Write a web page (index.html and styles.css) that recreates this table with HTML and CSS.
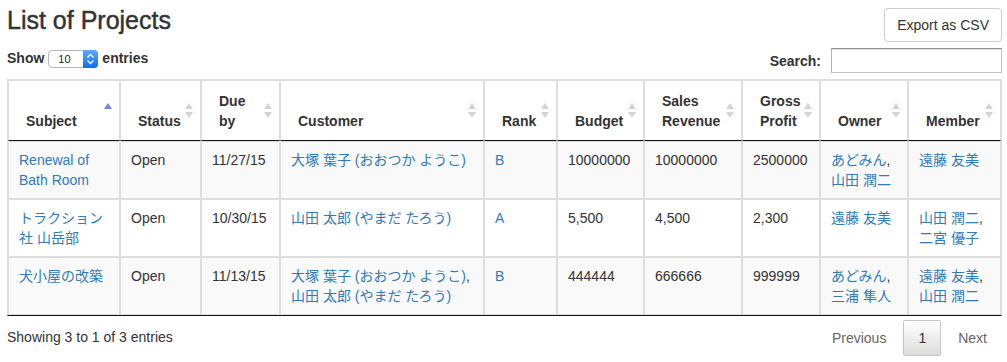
FILE: index.html
```html
<!DOCTYPE html>
<html lang="ja">
<head>
<meta charset="utf-8">
<title>List of Projects</title>
<link rel="stylesheet" href="styles.css">
</head>
<body>
<div class="page">
  <div class="title-row">
    <h3 class="title">List of Projects</h3>
    <button class="btn" type="button">Export as CSV</button>
  </div>
  <div class="controls">
    <div class="length">
      <span>Show</span>
      <span class="select"><span class="select-val">10</span><span class="stepper"><svg width="15" height="18" viewBox="0 0 15 18"><polyline points="4.5,7.5 7.5,4.5 10.5,7.5" fill="none" stroke="#fff" stroke-width="1.4"/><polyline points="4.5,10.5 7.5,13.5 10.5,10.5" fill="none" stroke="#fff" stroke-width="1.4"/></svg></span></span>
      <span>entries</span>
    </div>
    <div class="filter">
      <label class="filter-label" for="q">Search:</label>
      <input class="search" id="q" type="text">
    </div>
  </div>
  <table class="grid">
    <colgroup>
      <col class="c-subject"><col class="c-status"><col class="c-due"><col class="c-customer"><col class="c-rank"><col class="c-budget"><col class="c-sales"><col class="c-gross"><col class="c-owner"><col class="c-member">
    </colgroup>
    <thead>
      <tr>
        <th class="sort asc">Subject</th>
        <th class="sort both">Status</th>
        <th class="sort both">Due by</th>
        <th class="sort both">Customer</th>
        <th class="sort both">Rank</th>
        <th class="sort both">Budget</th>
        <th class="sort both">Sales Revenue</th>
        <th class="sort both">Gross Profit</th>
        <th class="sort both">Owner</th>
        <th class="sort both">Member</th>
      </tr>
    </thead>
    <tbody>
      <tr>
        <td><a href="#">Renewal of Bath Room</a></td>
        <td>Open</td>
        <td>11/27/15</td>
        <td><a href="#">大塚 葉子 (おおつか ようこ)</a></td>
        <td><a href="#">B</a></td>
        <td>10000000</td>
        <td>10000000</td>
        <td>2500000</td>
        <td><a href="#">あどみん</a>, <a href="#">山田 潤二</a></td>
        <td><a href="#">遠藤 友美</a></td>
      </tr>
      <tr>
        <td><a href="#">トラクション社 山岳部</a></td>
        <td>Open</td>
        <td>10/30/15</td>
        <td><a href="#">山田 太郎 (やまだ たろう)</a></td>
        <td><a href="#">A</a></td>
        <td>5,500</td>
        <td>4,500</td>
        <td>2,300</td>
        <td><a href="#">遠藤 友美</a></td>
        <td><a href="#">山田 潤二</a>, <a href="#">二宮 優子</a></td>
      </tr>
      <tr>
        <td><a href="#">犬小屋の改築</a></td>
        <td>Open</td>
        <td>11/13/15</td>
        <td><a href="#">大塚 葉子 (おおつか ようこ)</a>, <a href="#">山田 太郎 (やまだ たろう)</a></td>
        <td><a href="#">B</a></td>
        <td>444444</td>
        <td>666666</td>
        <td>999999</td>
        <td><a href="#">あどみん</a>, <a href="#">三浦 隼人</a></td>
        <td><a href="#">遠藤 友美</a>, <a href="#">山田 潤二</a></td>
      </tr>
    </tbody>
  </table>
  <div class="footer">
    <div class="info">Showing 3 to 1 of 3 entries</div>
    <div class="paginate">
      <span class="pg disabled">Previous</span>
      <span class="pg current">1</span>
      <span class="pg disabled">Next</span>
    </div>
  </div>
</div>
</body>
</html>
```

FILE: styles.css
```css
html, body {
  margin: 0;
  padding: 0;
  background: #fff;
}

body {
  font-family: "Liberation Sans", "Noto Sans CJK JP", Arial, sans-serif;
  font-size: 14px;
  line-height: 20px;
  color: #333;
}

a {
  color: #337ab7;
  text-decoration: none;
}

.page {
  padding: 0 5px 0 7px;
  width: 995px;
}

.title-row {
  display: flex;
  justify-content: space-between;
  align-items: flex-start;
  padding-top: 8px;
}

.title {
  margin: 0;
  font-size: 25px;
  line-height: 24px;
  font-weight: normal;
  -webkit-text-stroke: 0.45px #333;
  color: #333;
}

.btn {
  font-family: "Liberation Sans", Arial, sans-serif;
  font-size: 14px;
  line-height: 20px;
  color: #333;
  background: #fff;
  border: 1px solid #ccc;
  border-radius: 4px;
  padding: 6px 12px;
  margin: 0;
  height: 34px;
  white-space: nowrap;
}

.controls {
  display: flex;
  justify-content: space-between;
  align-items: flex-start;
  margin-top: 6px;
}

.length {
  display: flex;
  align-items: center;
  gap: 4px;
  height: 20px;
  font-weight: bold;
}

.select {
  display: inline-flex;
  align-items: stretch;
  width: 50px;
  height: 18px;
  box-sizing: border-box;
  border: 1px solid #b8b8b8;
  border-radius: 4px;
  background: #fff;
  font-weight: normal;
  margin-top: 1px;
}

.select-val {
  flex: 1;
  font-size: 11px;
  line-height: 16px;
  padding-left: 9px;
  color: #222;
}

.stepper {
  width: 15px;
  margin: -1px -1px -1px 0;
  border-radius: 0 4px 4px 0;
  background: linear-gradient(#5eabfb, #0b6ff2);
  display: flex;
}

.stepper svg {
  display: block;
}

.filter {
  display: flex;
  align-items: center;
}

.filter-label {
  font-weight: bold;
  margin-right: 10px;
  padding-top: 1px;
}

.search {
  width: 171px;
  height: 25px;
  box-sizing: border-box;
  margin: 0;
  border: 1px solid #c2c2c2;
  border-top-color: #8f8f8f;
  border-left-color: #b0b0b0;
  box-shadow: inset 0 1px 0 #e2e2e2;
  font-size: 14px;
  background: #fff;
}

.grid {
  width: 995px;
  margin-top: 6px;
  table-layout: fixed;
  border-collapse: separate;
  border-spacing: 0;
  border: 1px solid #ddd;
  border-bottom-color: #111;
}

.c-subject { width: 112px; }
.c-status { width: 81px; }
.c-due { width: 79px; }
.c-customer { width: 204px; }
.c-rank { width: 73px; }
.c-budget { width: 87px; }
.c-sales { width: 98px; }
.c-gross { width: 78px; }
.c-owner { width: 88px; }
.c-member { width: 93px; }

.grid th {
  position: relative;
  border: 1px solid #ddd;
  border-bottom: 1px solid #111;
  padding: 10px 16px 9px 17px;
  text-align: left;
  vertical-align: bottom;
  font-weight: bold;
  color: #333;
}

.grid td {
  border: 1px solid #ddd;
  padding: 8px 10px;
  vertical-align: top;
}

.grid tbody tr:nth-child(odd) td {
  background: #f9f9f9;
}

.sort::before,
.sort::after {
  content: "";
  position: absolute;
  right: 7px;
  width: 0;
  height: 0;
  border-left: 4px solid transparent;
  border-right: 4px solid transparent;
}

.sort::before {
  top: calc(50% - 8px);
  border-bottom: 6px solid #d4d4d4;
}

.sort::after {
  top: calc(50% + 1px);
  border-top: 6px solid #d4d4d4;
}

.sort.asc::before {
  border-bottom-color: #7f84da;
}

.sort.asc::after {
  display: none;
}

.footer {
  display: flex;
  justify-content: space-between;
  align-items: flex-start;
}

.info {
  padding-top: 11px;
}

.paginate {
  display: flex;
  padding-top: 4px;
}

.pg {
  display: inline-block;
  padding: 7px 14px;
  margin-left: 2px;
  border: 1px solid transparent;
  border-radius: 2px;
  line-height: 20px;
  color: #666;
}

.pg.current {
  color: #333;
  border-color: #c6c6c6;
  background: linear-gradient(#ffffff, #dcdcdc);
}
```
